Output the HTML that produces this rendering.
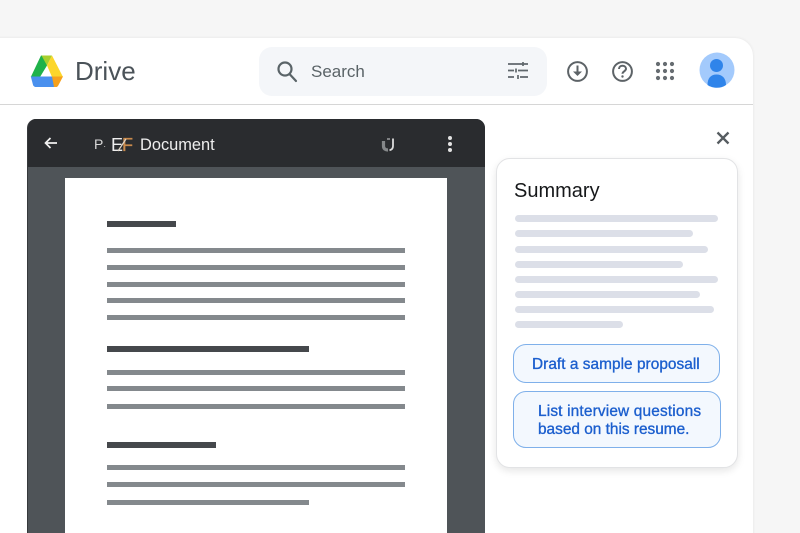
<!DOCTYPE html>
<html lang="en">
<head>
<meta charset="utf-8">
<title>Drive</title>
<style>
html,body{margin:0;padding:0;width:800px;height:533px;overflow:hidden;background:#f6f6f6;font-family:"Liberation Sans",sans-serif}
div,span,svg{position:absolute;box-sizing:border-box}
#root{left:0;top:0;width:800px;height:533px;overflow:hidden;background:#f6f6f6}
.t{white-space:nowrap;line-height:1}
.l{left:107px;height:5px;background:#84898d;width:298px}
.h{left:107px;height:6px;background:#45484c}
.b{left:515px;height:7px;border-radius:4px;background:#dcdfe8}
.btn{background:#f3f8fe;border:1px solid #7fb0ea;border-radius:13px}
.bt{color:#1c5fce;font-size:15.4px;-webkit-text-stroke:.35px #1c5fce}
</style>
</head>
<body>
<div id="root">
<div style="left:-20px;top:38px;width:773px;height:520px;background:#fff;border-radius:18px;box-shadow:0 0 3px rgba(0,0,0,.08)"></div>
<div style="left:0;top:104px;width:753px;height:1px;background:#d6d6d6"></div>

<svg style="left:28px;top:53px" width="38" height="37" viewBox="28 53 38 37">
  <path d="M41 55.500h6v10l-7 11.500h-9.200z" fill="#1fb24a"/>
  <path d="M41.500 55.500h10.500l-5 10z" fill="#a8cf2e"/>
  <path d="M52 55.500l11 21.500h-11l-5-11.500z" fill="#fcd62b"/>
  <path d="M30.800 76.500h25l1 10.500h-20.500c-1.500 0-2.500-.6-3.200-1.800z" fill="#4a90ee"/>
  <path d="M52 76.500h11l-4.800 9.100c-.6 1-1.400 1.400-2.500 1.400h-1.700z" fill="#f6a11c"/>
</svg>
<div class="t" style="left:75px;top:58px;font-size:26px;color:#4b5359">Drive</div>

<div style="left:259px;top:47px;width:288px;height:49px;background:#f4f6f9;border-radius:13px"></div>
<svg style="left:274px;top:59px" width="26" height="26" viewBox="0 0 26 26" fill="none" stroke="#5a6468" stroke-width="2.200"><circle cx="11" cy="10" r="6.500"/><path d="M15.500 15l6.500 7" stroke-linecap="round"/></svg>
<div class="t" style="left:311px;top:63px;font-size:17px;color:#5a6367">Search</div>
<svg style="left:506px;top:60px" width="24" height="22" viewBox="0 0 24 22" fill="none" stroke="#5f676c" stroke-width="1.700"><path d="M2 4h20M2 10.500h6M12 10.500h10M2 17h6M14 17h8M17 2v4M10 8.500v4M12 15v4"/></svg>

<svg style="left:566px;top:60px" width="24" height="23" viewBox="0 0 24 23" fill="none" stroke="#5d6367" stroke-width="2"><circle cx="11.500" cy="11.500" r="9.400"/><path d="M11.500 5.500v6"/><path d="M7 11.500h9l-4.500 4.500z" fill="#5d6367" stroke="none"/></svg>
<svg style="left:611px;top:60px" width="23" height="23" viewBox="0 0 23 23" fill="none" stroke="#5d6367" stroke-width="2"><circle cx="11.500" cy="11.500" r="9.400"/><path d="M8 9c0-2 1.500-3.200 3.500-3.200S15 7 15 8.800c0 2.400-3.500 2.600-3.500 5"/><circle cx="11.500" cy="16.500" r="1.200" fill="#5d6367" stroke="none"/></svg>
<svg style="left:655px;top:61px" width="20" height="20" viewBox="0 0 20 20" fill="#666c71"><circle cx="3" cy="3" r="2.100"/><circle cx="10" cy="3" r="2.100"/><circle cx="17" cy="3" r="2.100"/><circle cx="3" cy="10" r="2.100"/><circle cx="10" cy="10" r="2.100"/><circle cx="17" cy="10" r="2.100"/><circle cx="3" cy="17" r="2.100"/><circle cx="10" cy="17" r="2.100"/><circle cx="17" cy="17" r="2.100"/></svg>
<svg style="left:699px;top:52px" width="36" height="36" viewBox="0 0 36 36"><circle cx="18" cy="18" r="17.500" fill="#a3cafc"/><circle cx="17.500" cy="13.500" r="6.500" fill="#2f84ea"/><path d="M8.500 33c0-7 3.500-10.500 9-10.500s9.500 3.500 9.500 10.500c-2.500 1.800-5.800 2.800-9 2.800s-7-1-9.500-2.800z" fill="#2f84ea"/></svg>

<div style="left:27px;top:119px;width:458px;height:430px;background:#4f5458;border-radius:9px 9px 0 0;overflow:hidden;border-left:1px solid #36393c">
  <div style="left:-1px;top:0;width:460px;height:48px;background:#2a2c2f"></div>
</div>
<svg style="left:43px;top:136px" width="16" height="14" viewBox="0 0 16 14" fill="none" stroke="#f1f1f1" stroke-width="1.700"><path d="M14 7H2.500M7.500 2L2.500 7l5 5"/></svg>
<div class="t" style="left:94px;top:137px;font-size:14px;color:#d8d8d8">P<span style="position:static;font-size:8px">·</span></div>
<div class="t" style="left:111px;top:136px;font-size:18px;color:#eeeeee">E</div>
<div class="t" style="left:122px;top:136px;font-size:18px;color:#c98a4c;-webkit-text-stroke:.3px #c98a4c">F</div>
<svg style="left:117px;top:136px" width="12" height="17" viewBox="0 0 12 17"><path d="M1 15L9 3" stroke="#e0d6c8" stroke-width="1.200"/></svg>
<div class="t" style="left:140px;top:137px;font-size:16.400px;color:#eeeeee">Document</div>
<svg style="left:380px;top:136px" width="17" height="17" viewBox="0 0 17 17" fill="none"><path d="M3.500 5v5c0 3 2 4 4.500 4" stroke="#85888a" stroke-width="3.200"/><path d="M13 2.500v7.500c0 2.200-1 3.700-3.500 4.200" stroke="#dcdcdc" stroke-width="1.800"/><path d="M7 3h3" stroke="#9a9c9e" stroke-width="1.500"/></svg>
<svg style="left:446px;top:135px" width="8" height="18" viewBox="0 0 8 18" fill="#e2e2e2"><circle cx="4" cy="3" r="2"/><circle cx="4" cy="9" r="2"/><circle cx="4" cy="15" r="2"/></svg>

<div style="left:65px;top:178px;width:382px;height:360px;background:#fff"></div>
<div class="h" style="top:221px;width:69px"></div>
<div class="l" style="top:248px"></div>
<div class="l" style="top:265px"></div>
<div class="l" style="top:282px"></div>
<div class="l" style="top:298px"></div>
<div class="l" style="top:315px"></div>
<div class="h" style="top:346px;width:202px"></div>
<div class="l" style="top:370px"></div>
<div class="l" style="top:386px"></div>
<div class="l" style="top:404px"></div>
<div class="h" style="top:442px;width:109px"></div>
<div class="l" style="top:465px"></div>
<div class="l" style="top:482px"></div>
<div class="l" style="top:500px;width:202px"></div>

<svg style="left:715px;top:130px" width="16" height="16" viewBox="0 0 16 16" fill="none" stroke="#565c60" stroke-width="2.300"><path d="M2.500 2.500l11 11M13.500 2.500l-11 11"/></svg>

<div style="left:496px;top:158px;width:242px;height:310px;background:#fff;border:1px solid #e2e3e5;border-radius:14px;box-shadow:0 3px 8px rgba(0,0,0,.1)"></div>
<div class="t" style="left:514px;top:181px;font-size:20px;color:#16181a">Summary</div>
<div class="b" style="top:215px;width:203px"></div>
<div class="b" style="top:230px;width:178px"></div>
<div class="b" style="top:246px;width:193px"></div>
<div class="b" style="top:261px;width:168px"></div>
<div class="b" style="top:276px;width:203px"></div>
<div class="b" style="top:291px;width:185px"></div>
<div class="b" style="top:306px;width:199px"></div>
<div class="b" style="top:321px;width:108px"></div>

<div class="btn" style="left:513px;top:344px;width:207px;height:39px"></div>
<div class="t bt" style="left:532px;top:357px;letter-spacing:.04px">Draft a sample proposall</div>
<div class="btn" style="left:513px;top:391px;width:208px;height:57px"></div>
<div class="t bt" style="left:538px;top:404px;letter-spacing:.17px">List interview questions</div>
<div class="t bt" style="left:538px;top:422px">based on this resume.</div>
</div>
</body>
</html>
